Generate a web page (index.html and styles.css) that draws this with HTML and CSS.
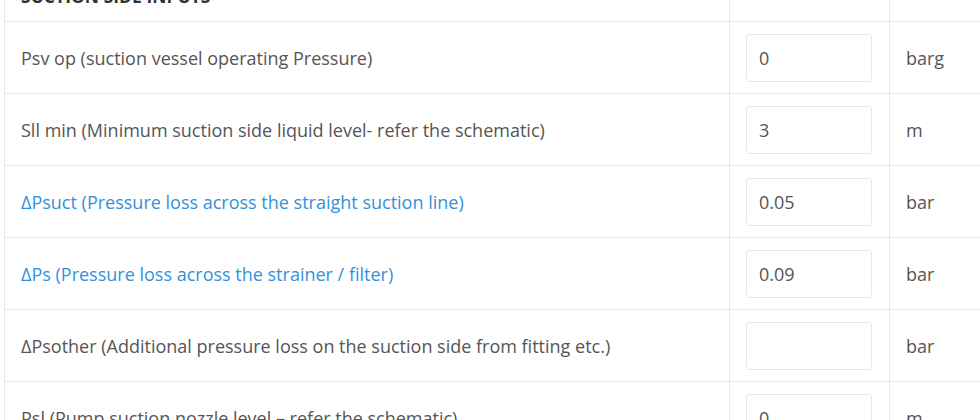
FILE: index.html
```html
<!DOCTYPE html>
<html>
<head>
<meta charset="utf-8">
<link rel="stylesheet" href="styles.css">
</head>
<body>
<div class="page">
  <table class="inputs">
    <colgroup>
      <col class="c-label">
      <col class="c-value">
      <col class="c-unit">
    </colgroup>
    <tbody>
      <tr class="head">
        <th>SUCTION SIDE INPUTS</th>
        <th></th>
        <th></th>
      </tr>
      <tr>
        <td class="label">Psv op (suction vessel operating Pressure)</td>
        <td class="value"><input class="field" type="text" value="0"></td>
        <td class="unit">barg</td>
      </tr>
      <tr>
        <td class="label">Sll min (Minimum suction side liquid level- refer the schematic)</td>
        <td class="value"><input class="field" type="text" value="3"></td>
        <td class="unit">m</td>
      </tr>
      <tr>
        <td class="label link">ΔPsuct (Pressure loss across the straight suction line)</td>
        <td class="value"><input class="field" type="text" value="0.05"></td>
        <td class="unit">bar</td>
      </tr>
      <tr>
        <td class="label link">ΔPs (Pressure loss across the strainer / filter)</td>
        <td class="value"><input class="field" type="text" value="0.09"></td>
        <td class="unit">bar</td>
      </tr>
      <tr>
        <td class="label">ΔPsother (Additional pressure loss on the suction side from fitting etc.)</td>
        <td class="value"><input class="field" type="text" value=""></td>
        <td class="unit">bar</td>
      </tr>
      <tr>
        <td class="label">Psl (Pump suction nozzle level – refer the schematic)</td>
        <td class="value"><input class="field" type="text" value="0"></td>
        <td class="unit">m</td>
      </tr>
    </tbody>
  </table>
</div>
</body>
</html>
```

FILE: styles.css
```css
html, body {
  margin: 0;
  padding: 0;
  background: #ffffff;
  overflow: hidden;
}

body {
  font-family: "Open Sans", "Liberation Sans", sans-serif;
  font-size: 18px;
  color: #555555;
}

.page {
  padding-left: 4px;
  margin-top: -30px;
}

.inputs {
  border-collapse: collapse;
  table-layout: fixed;
  width: 1040px;
}

.c-label { width: 725px; }
.c-value { width: 160px; }
.c-unit { width: 155px; }

.inputs th,
.inputs td {
  border: 1px solid #e8e8e8;
  vertical-align: middle;
}

.head th {
  text-align: left;
  font-weight: 700;
  font-size: 17.5px;
  color: #333333;
  padding: 12px 16px;
  height: 26px;
  line-height: 26px;
}

.inputs td {
  height: 72px;
  padding: 0 16px;
  box-sizing: border-box;
}

.label {
  line-height: 26px;
}

.link {
  color: #3391da;
}

.value {
  padding: 0 16px;
}

.field {
  display: block;
  box-sizing: border-box;
  width: 126px;
  height: 48px;
  border: 1px solid #e6e6e6;
  border-radius: 3px;
  padding: 0 12px;
  font-family: "Open Sans", "Liberation Sans", sans-serif;
  font-size: 18px;
  color: #555555;
  background: #ffffff;
  outline: none;
}

.unit {
  line-height: 26px;
}
```
